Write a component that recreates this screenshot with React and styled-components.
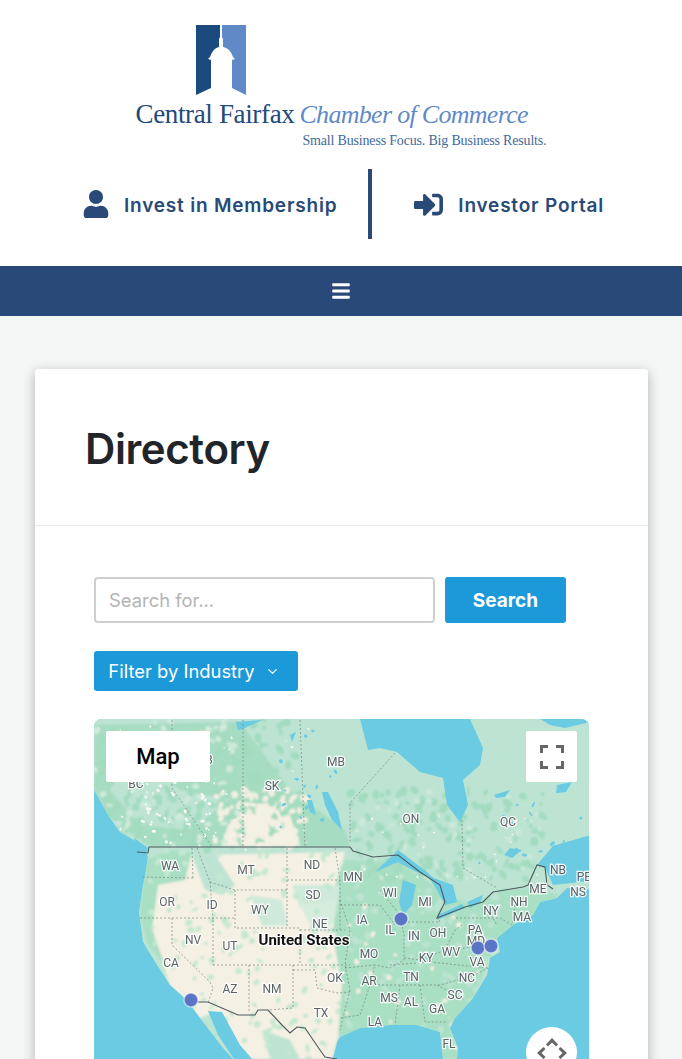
import React from 'react'
import styled, { createGlobalStyle } from 'styled-components'
import { FaUser, FaSignInAlt, FaBars } from 'react-icons/fa'
import { FiChevronDown } from 'react-icons/fi'

const Global = createGlobalStyle`
    html, body {
        margin: 0;
        height: 100%;
        overflow: hidden;
        background: #f4f6f6;
        font-family: Inter, "Liberation Sans", sans-serif;
    }
    * { box-sizing: border-box; }
`

const Header = styled.header`
    background: #fff;
    height: 266px;
    padding-top: 25px;
`
const Logo = styled.div`
    width: 411px;
    margin: 0 auto;
    font-family: "Liberation Serif", serif;
`
const LogoMark = styled.svg`
    display: block;
    margin-left: 60px;
`
const LogoLine = styled.div`
    display: flex;
    align-items: baseline;
    height: 33px;
    line-height: 39px;
    white-space: nowrap;
`
const LogoName = styled.span`
    font-size: 27px;
    letter-spacing: -0.35px;
    color: #1f4a7c;
`
const LogoChamber = styled.span`
    font-size: 26px;
    font-style: italic;
    letter-spacing: -0.7px;
    color: #5f8ac7;
    margin-left: 5px;
`
const LogoTag = styled.div`
    margin: 4px 0 0 167px;
    font-size: 14px;
    letter-spacing: -0.18px;
    line-height: 18px;
    color: #3f6a9c;
    white-space: nowrap;
`
const QuickLinks = styled.nav`
    display: flex;
    align-items: center;
    margin-top: 19px;
    padding-left: 82px;
    height: 70px;
    color: #294a78;
`
const QuickLink = styled.a`
    display: flex;
    align-items: center;
    gap: ${p => p.$gap}px;
    font-size: 19px;
    font-weight: 600;
    letter-spacing: 0.8px;
    line-height: 25px;
    white-space: nowrap;
`
const LinkText = styled.span`
    padding-top: 2px;
`
const Divider = styled.div`
    width: 4px;
    height: 70px;
    background: #294a78;
    margin: 0 42px 0 31px;
`
const NavBar = styled.div`
    height: 50px;
    background: #294a78;
    color: #fff;
    display: flex;
    align-items: center;
    justify-content: center;
`
const Card = styled.main`
    margin: 53px 34px 0 35px;
    background: #fff;
    border-radius: 3px;
    box-shadow: 0 3px 12px rgba(0, 0, 0, 0.28);
`
const CardHead = styled.div`
    height: 157px;
    padding: 0 50px;
    display: flex;
    align-items: center;
    border-bottom: 1px solid #e8eaea;
`
const Title = styled.h1`
    margin: 3px 0 0;
    font-size: 42px;
    font-weight: 600;
    letter-spacing: -0.4px;
    color: #212529;
`
const CardBody = styled.div`
    padding: 51px 59px 0;
`
const SearchRow = styled.form`
    display: flex;
    gap: 10px;
`
const SearchInput = styled.input`
    width: 341px;
    height: 46px;
    padding: 0 13px;
    border: 2px solid #cfcfcf;
    border-radius: 4px;
    font: 400 18.4px Inter, sans-serif;
    &::placeholder { color: #b4b4b4; opacity: 1; }
`
const Button = styled.button`
    display: flex;
    align-items: center;
    justify-content: center;
    border: 0;
    border-radius: 3px;
    background: #1b99d8;
    color: #fff;
    font-family: Inter, sans-serif;
`
const SearchButton = styled(Button)`
    width: 121px;
    height: 46px;
    font-size: 19px;
    font-weight: 700;
`
const FilterButton = styled(Button)`
    width: 204px;
    height: 40px;
    margin-top: 28px;
    padding: 0 4px 0 0;
    gap: 10px;
    font-size: 18.4px;
    font-weight: 400;
`
const MapBox = styled.div`
    position: relative;
    width: 495px;
    height: 420px;
    margin-top: 28px;
    border-radius: 8px;
    overflow: hidden;
    background: #6bcbe3;
`
const MapSvg = styled.svg`
    display: block;
`
const MapLabel = styled.text`
    font-family: Roboto, sans-serif;
    font-size: ${p => p.$big ? 15 : 12}px;
    font-weight: ${p => p.$big ? 700 : 400};
    fill: ${p => p.$big ? '#111' : '#5b6266'};
    stroke: #fff;
    stroke-opacity: 0.85;
    stroke-width: 2.5px;
    paint-order: stroke;
    text-anchor: middle;
`
const MapTypeChip = styled.div`
    position: absolute;
    left: 12px;
    top: 12px;
    width: 104px;
    height: 51px;
    background: #fff;
    border-radius: 2px;
    display: flex;
    align-items: center;
    justify-content: center;
    font: 500 22px Roboto, sans-serif;
    color: #000;
`
const FullscreenChip = styled.div`
    position: absolute;
    right: 12px;
    top: 12px;
    width: 51px;
    height: 51px;
    background: #fff;
    border-radius: 2px;
    display: flex;
    align-items: center;
    justify-content: center;
`
const PanChip = styled.div`
    position: absolute;
    left: 432px;
    top: 308px;
    width: 51px;
    height: 51px;
    background: #fff;
    border-radius: 50%;
    display: flex;
    align-items: center;
    justify-content: center;
`

const LAND = 'M94 719H600V835L588 836L553 846L537 865L545 868L553 885L600 880V890L567 888L557 898L540 902L533 915L513 925L497 938L500 952L490 958L487 975L473 998L455 1018L450 1028L458 1048L457 1059H443L440 1032L417 1025L390 1025L360 1028L340 1037L337 1042L333 1059H233L223 1048L200 1018L187 1000L170 985L157 965L143 942L139 912L143 885L146 870L148 856L137 842L120 832L110 818L97 795L94 790Z'

const terrain = [
    ['#a9dfc3', 'M345 860L398 862L440 890L470 905L500 890L530 888L560 895L533 915L497 938L490 958L473 998L450 1028L458 1059H443L440 1032L390 1025L340 1037L328 1010L335 950L330 900Z'],
    ['#a6dcc1', 'M94 725L240 722L290 790L345 830L350 846L150 847L110 818L94 790Z'],
    ['#bde4d3', 'M130 745L180 790L230 800L190 830L140 825L110 790Z'],
    ['#f5f0e4', 'M155 856L345 852L334 890L332 930L342 985L338 1036L332 1059H252L237 1045L210 1014L200 1018L170 985L160 955L150 920L150 885Z'],
    ['#f5f0e4', 'M228 825L252 805L285 800L300 846L222 846Z'],
    ['#a9dfc3', 'M146 860L170 850L192 852L185 880L158 885L152 930L165 965L148 945L140 915Z'],
    ['#bde4d3', 'M190 850L212 850L235 885L222 895L205 890Z'],
    ['#cfeadb', 'M250 895L282 900L288 925L262 926Z'],
    ['#cfeadb', 'M292 885L340 885L338 900L300 908Z'],
    ['#d6ecdc', 'M300 905L338 900L332 935L310 925Z'],
    ['#bde4d3', 'M262 1030L290 1040L300 1059H270Z'],
]

const water = [
    'M360 719H470L483 748L480 765L463 780L468 805L460 822L447 805L443 778L420 772L397 752L380 748L368 750Z',
    'M208 1011L222 1012L240 1045L252 1059H234L218 1035Z',
    'M375 872L398 850L427 872L445 888L430 878L412 870L398 862Z',
    'M403 880L416 885L412 905L403 915L399 902Z',
    'M428 876L453 885L457 902L445 905L437 890Z',
    'M437 920L465 908L462 904L438 915Z',
    'M467 902L483 895L480 903L470 908Z',
    'M553 846L588 836V853L565 850L545 860L537 866Z',
    'M540 719H590V722L565 728L550 725Z',
    'M322 792L328 792L338 812L342 830L332 820L325 805Z',
    'M307 800L312 800L316 815L310 812Z',
    'M494 795L510 790L505 797L496 798Z',
    'M510 848L522 850L512 858L504 855Z',
    'M557 785L572 782L566 792L556 793Z',
    'M236 722L262 720L245 728L238 730Z',
    'M290 735L296 732L292 742Z',
    'M134 838L148 848L146 856L137 846Z',
]

const stateBorders = [
    'M172 720V788L212 847', 'M243 720V847', 'M300 720L305 847', 'M395 753L350 803V843',
    'M462 820L463 868L480 878L497 888', 'M143 877L193 878', 'M192 848L193 878',
    'M197 848L210 882L213 920', 'M140 918H235', 'M172 918V945L210 982L213 988L208 1003',
    'M213 920V965', 'M213 965H350', 'M249 965V1013', 'M235 890V928H300V965', 'M210 882L235 890H287',
    'M287 848V928', 'M287 880H340', 'M335 848L340 880V930', 'M293 965V1008L268 1010',
    'M293 970L315 970L317 988L337 993L350 992', 'M300 930H345', 'M340 900L350 930L345 965L350 990',
    'M350 990L340 1030', 'M340 905H380L395 925', 'M380 890L400 915L404 935V960L390 968L375 965',
    'M345 968L375 965L370 985L360 1015L340 1018', 'M370 985H440L475 975L488 968',
    'M400 985L395 1025', 'M420 985L425 1022H448', 'M404 922H440L438 918',
    'M404 958L420 960L445 950L455 930L462 925', 'M456 918H500L512 925', 'M485 905L497 925',
    'M515 905L512 925', 'M390 965L430 962L488 968', 'M455 950L480 945', 'M437 985L465 1000',
]

const states = [
    ['MB', 336, 766], ['SK', 272, 790], ['BC', 136, 788], ['AB', 205, 764], ['ON', 411, 823], ['QC', 508, 826],
    ['NB', 558, 874], ['NS', 578, 896], ['PE', 584, 881], ['WA', 170, 870], ['MT', 246, 874], ['ND', 312, 869],
    ['MN', 353, 881], ['WI', 390, 897], ['MI', 425, 906], ['ME', 538, 893], ['OR', 167, 906], ['ID', 212, 909],
    ['WY', 260, 914], ['SD', 313, 899], ['NE', 320, 928], ['IA', 362, 924], ['IL', 390, 934], ['IN', 414, 940],
    ['OH', 438, 937], ['PA', 475, 934], ['MD', 476, 945], ['NY', 491, 915], ['NH', 519, 906], ['MA', 522, 921],
    ['NV', 193, 944], ['UT', 230, 950], ['CA', 171, 967], ['AZ', 230, 993], ['NM', 272, 993], ['TX', 321, 1017],
    ['OK', 335, 982], ['MO', 369, 958], ['KY', 426, 962], ['WV', 451, 956], ['VA', 477, 966], ['AR', 369, 985],
    ['TN', 411, 981], ['NC', 467, 982], ['SC', 455, 999], ['MS', 389, 1002], ['AL', 411, 1006], ['GA', 437, 1013],
    ['LA', 375, 1026], ['FL', 449, 1048],
]

const pins = [[401, 919], [478, 948], [491, 946], [191, 1000]]

// seeded so the mottled terrain comes out the same on every render
let seed = 4217
const rnd = () => {
    seed = (seed * 16807) % 2147483647
    return seed / 2147483647
}

const scatter = (fill, x0, y0, x1, y1, count, rMin, rMax) =>
    Array.from({ length: count }, () => ({
        fill,
        x: x0 + rnd() * (x1 - x0),
        y: y0 + rnd() * (y1 - y0),
        rx: rMin + rnd() * (rMax - rMin),
        ry: rMin + rnd() * (rMax - rMin) * 0.6,
        a: rnd() * 180,
    }))

const blobs = [
    ...scatter('#a2dbbe', 94, 720, 300, 850, 170, 1.5, 6),
    ...scatter('#cfeadb', 94, 720, 240, 850, 70, 1.5, 5),
    ...scatter('#f5f0e4', 215, 790, 305, 848, 80, 1.5, 5),
    ...scatter('#a2dbbe', 350, 790, 545, 880, 160, 1.5, 5.5),
    ...scatter('#cfeadb', 350, 790, 545, 880, 40, 1.5, 4),
    ...scatter('#c4e8d0', 150, 850, 340, 1059, 170, 1.5, 4.5),
    ...scatter('#f5f0e4', 320, 900, 480, 1030, 24, 1.5, 3.5),
    ...scatter('#bde4d3', 345, 880, 500, 1030, 90, 1.5, 5.5),
]

const flecks = [
    ...scatter('#f7f7f3', 140, 780, 215, 845, 40, 0.8, 2.4),
    ...scatter('#f7f7f3', 110, 725, 340, 850, 40, 0.6, 1.6),
    ...scatter('#f7f7f3', 360, 815, 540, 880, 25, 0.6, 1.4),
    ...scatter('#6bcbe3', 280, 730, 345, 830, 16, 0.8, 2.5),
    ...scatter('#6bcbe3', 470, 775, 585, 870, 14, 0.8, 3),
]

function Blob({ b }) {
    return <ellipse cx={b.x} cy={b.y} rx={b.rx} ry={b.ry} fill={b.fill} transform={`rotate(${b.a} ${b.x} ${b.y})`} />
}

function MapArt() {
    return (
        <MapSvg width="495" height="420" viewBox="94 719 495 420">
            <defs>
                <clipPath id="land"><path d={LAND} /></clipPath>
                <filter id="soft" x="-5%" y="-5%" width="110%" height="110%"><feGaussianBlur stdDeviation="0.9" /></filter>
                <filter id="softer"><feGaussianBlur stdDeviation="0.4" /></filter>
            </defs>
            <path d={LAND} fill="#bde4d3" filter="url(#softer)" />
            <g clipPath="url(#land)">
                <g filter="url(#soft)">
                    {terrain.map(([fill, d], i) => <path key={i} fill={fill} d={d} />)}
                    {blobs.map((b, i) => <Blob key={i} b={b} />)}
                </g>
                <g filter="url(#softer)">
                    {flecks.map((b, i) => <Blob key={i} b={b} />)}
                </g>
            </g>
            <g filter="url(#softer)">
                {water.map((d, i) => <path key={i} fill="#6bcbe3" d={d} />)}
            </g>
            <path fill="none" stroke="#6f7f7c" strokeOpacity="0.8" strokeWidth="0.8" strokeDasharray="2 2"
                d={stateBorders.join(' ')} />
            <path fill="none" stroke="#4c5a5e" strokeWidth="1.1"
                d="M137 852L148 853L149 847H350L353 851L373 857L398 855L420 872L440 885L445 902L437 918L465 907L483 902L493 892L523 887L528 885L537 865L545 867L547 885L553 889" />
            <path fill="none" stroke="#4c5a5e" strokeWidth="1.1"
                d="M197 1002L208 1002L238 1015L255 1015L258 1010L268 1010L282 1025L290 1033L297 1027L305 1028L320 1050L325 1057L337 1059" />
            {states.map(([t, x, y]) => <MapLabel key={t} x={x} y={y}>{t}</MapLabel>)}
            <MapLabel $big x="304" y="945">United States</MapLabel>
            {pins.map(([x, y]) => (
                <circle key={x} cx={x} cy={y} r="7" fill="#5a74c6" stroke="#fff" strokeOpacity="0.55" strokeWidth="1.5" />
            ))}
        </MapSvg>
    )
}

function App() {
    return (
        <>
            <Global />
            <Header>
                <Logo>
                    <LogoMark width="50" height="70" viewBox="0 0 50 70">
                        <path fill="#1a4a7e" d="M0 0H24V12L23 14V22Q17 23 14 32L12 34L15 35V63L0 70Z" />
                        <path fill="#5f8ac7" d="M26 0H50V70L36 63V35L39 34L37 32Q34 23 27 22V14L26 12Z" />
                    </LogoMark>
                    <LogoLine>
                        <LogoName>Central Fairfax</LogoName>
                        <LogoChamber>Chamber of Commerce</LogoChamber>
                    </LogoLine>
                    <LogoTag>Small Business Focus. Big Business Results.</LogoTag>
                </Logo>
                <QuickLinks>
                    <QuickLink $gap={14}><FaUser size={28} /><LinkText>Invest in Membership</LinkText></QuickLink>
                    <Divider />
                    <QuickLink $gap={15}><FaSignInAlt size={29} /><LinkText>Investor Portal</LinkText></QuickLink>
                </QuickLinks>
            </Header>
            <NavBar><FaBars size={20} /></NavBar>
            <Card>
                <CardHead>
                    <Title>Directory</Title>
                </CardHead>
                <CardBody>
                    <SearchRow>
                        <SearchInput placeholder="Search for..." />
                        <SearchButton type="button">Search</SearchButton>
                    </SearchRow>
                    <FilterButton type="button">Filter by Industry <FiChevronDown size={15} /></FilterButton>
                    <MapBox>
                        <MapArt />
                        <MapTypeChip>Map</MapTypeChip>
                        <FullscreenChip>
                            <svg width="24" height="24" viewBox="0 0 24 24" fill="none" stroke="#666" strokeWidth="3">
                                <path d="M1.5 8V1.5H8M16 1.5H22.5V8M22.5 16V22.5H16M8 22.5H1.5V16" />
                            </svg>
                        </FullscreenChip>
                        <PanChip>
                            <svg width="32" height="32" viewBox="0 0 32 32" fill="#666">
                                <path d="M16 1L22 7.5L20 9.5L16 5.5L12 9.5L10 7.5Z" />
                                <path d="M1 16L7.5 10L9.5 12L5.5 16L9.5 20L7.5 22Z" />
                                <path d="M31 16L24.5 10L22.5 12L26.5 16L22.5 20L24.5 22Z" />
                                <path d="M16 31L22 24.5L20 22.5L16 26.5L12 22.5L10 24.5Z" />
                            </svg>
                        </PanChip>
                    </MapBox>
                </CardBody>
            </Card>
        </>
    )
}

export default App
